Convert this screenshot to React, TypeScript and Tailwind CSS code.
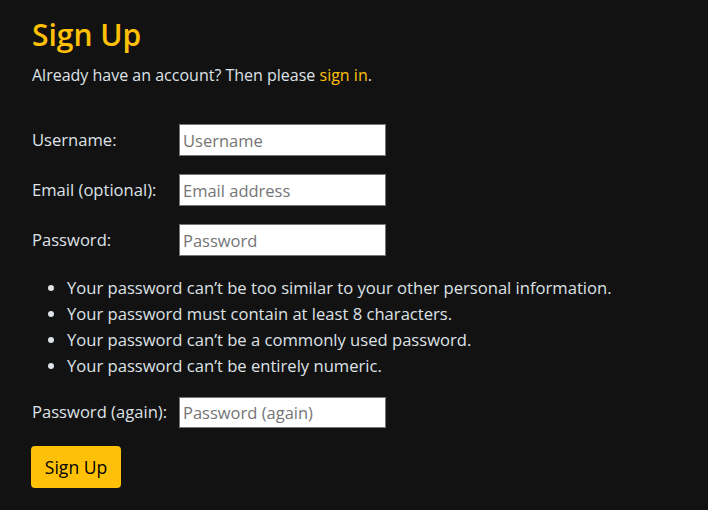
import React from "react";

export default function App() {
  const font = { fontFamily: '"Open Sans", "Noto Sans", sans-serif' };
  return (
    <div className="min-h-[510px] bg-[#121212] text-[#dee2e6] px-[32px] pt-[15px] pb-[20px]" style={font}>
      <h1 className="text-[30px] font-semibold leading-[40px] text-[#ffc107]">Sign Up</h1>
      <p className="mt-[8px] text-[16px] leading-[24px]">
        Already have an account? Then please <a className="text-[#ffc107]">sign in</a>.
      </p>
      <form className="mt-[37px]">
        <div className="flex flex-col gap-[18px]">
          {[
            ["Username:", "Username"],
            ["Email (optional):", "Email address"],
            ["Password:", "Password"],
          ].map(([l, p]) => (
            <div key={l} className="flex items-center">
              <label className="w-[147px] text-[16.6px]">{l}</label>
              <input
                placeholder={p}
                className="w-[207px] h-[32px] bg-white border border-[#767676] px-[3px] text-[16.5px] text-black placeholder:text-[#757575]"
              />
            </div>
          ))}
        </div>
        <ul className="list-disc pl-[35px] mt-[19px] text-[16.6px] leading-[26px]">
          <li>Your password can’t be too similar to your other personal information.</li>
          <li>Your password must contain at least 8 characters.</li>
          <li>Your password can’t be a commonly used password.</li>
          <li>Your password can’t be entirely numeric.</li>
        </ul>
        <div className="flex items-center mt-[18px]">
          <label className="w-[147px] text-[16.6px]">Password (again):</label>
          <input
            placeholder="Password (again)"
            className="w-[207px] h-[31px] bg-white border border-[#767676] px-[3px] text-[16.5px] text-black placeholder:text-[#757575]"
          />
        </div>
        <button
          type="button"
          className="mt-[18px] h-[42px] w-[90px] -ml-[1px] rounded-[4px] bg-[#ffc107] text-[17.5px] text-black"
        >
          Sign Up
        </button>
      </form>
    </div>
  );
}
